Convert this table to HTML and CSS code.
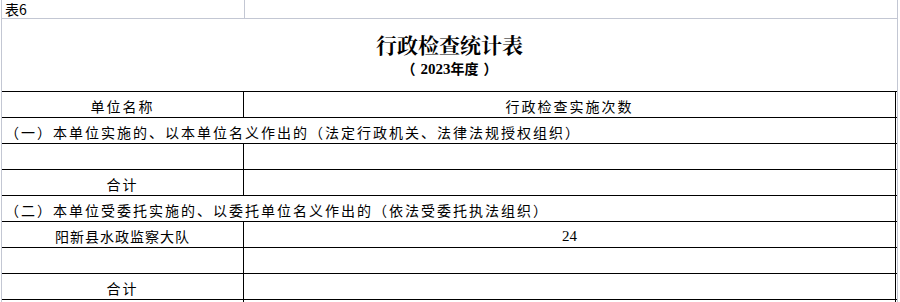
FILE: index.html
```html
<!DOCTYPE html>
<html lang="zh-CN">
<head>
<meta charset="utf-8">
<title>行政检查统计表</title>
<link rel="stylesheet" href="styles.css">
</head>
<body>
<div class="sheet">
  <div class="row-top">
    <div class="cell-a">表6</div>
    <div class="cell-b"></div>
  </div>
  <div class="title-row">
    <div class="title">行政检查统计表</div>
    <div class="subtitle">（<span class="inner"><span class="num">2023</span>年度</span>）</div>
  </div>
  <div class="table">
    <div class="tr">
      <div class="td c1 center">单位名称</div>
      <div class="td c2 center">行政检查实施次数</div>
    </div>
    <div class="tr">
      <div class="td span">（一）本单位实施的、以本单位名义作出的（法定行政机关、法律法规授权组织）</div>
    </div>
    <div class="tr">
      <div class="td c1"></div>
      <div class="td c2"></div>
    </div>
    <div class="tr">
      <div class="td c1 center">合计</div>
      <div class="td c2"></div>
    </div>
    <div class="tr">
      <div class="td span">（二）本单位受委托实施的、以委托单位名义作出的（依法受委托执法组织）</div>
    </div>
    <div class="tr">
      <div class="td c1 center tight">阳新县水政监察大队</div>
      <div class="td c2 center num">24</div>
    </div>
    <div class="tr">
      <div class="td c1"></div>
      <div class="td c2"></div>
    </div>
    <div class="tr">
      <div class="td c1 center">合计</div>
      <div class="td c2"></div>
    </div>
    <div class="tr">
      <div class="td c1"></div>
      <div class="td c2"></div>
    </div>
  </div>
</div>
</body>
</html>
```

FILE: styles.css
```css
html, body {
  margin: 0;
  padding: 0;
  background: #ffffff;
}

body {
  font-family: "Noto Sans CJK SC", "Noto Sans", sans-serif;
  color: #000;
  width: 900px;
  height: 302px;
  overflow: hidden;
}

.sheet {
  margin-left: 1px;
  border-left: 1px solid #c3c7d3;
  border-right: 1px solid #c3c7d3;
  height: 302px;
  width: 895px;
  overflow: hidden;
}

.row-top {
  display: flex;
  height: 18px;
  border-bottom: 1px solid #c3c7d3;
}

.cell-a {
  width: 239px;
  padding-left: 3px;
  border-right: 1px solid #c3c7d3;
  font-size: 14px;
  line-height: 18px;
}

.cell-b {
  flex: 1;
}

.title-row {
  height: 72px;
  display: flex;
  flex-direction: column;
  align-items: center;
}

.title {
  margin-top: 12px;
  font-family: "Noto Serif CJK SC", "Noto Sans CJK SC", serif;
  font-weight: 700;
  font-size: 21px;
  line-height: 26px;
}

.subtitle {
  margin-top: 2px;
  font-weight: 700;
  font-size: 14px;
  line-height: 18px;
}

.subtitle .inner {
  padding: 0 5px;
}

.subtitle .num {
  font-family: "Liberation Serif", serif;
  font-size: 15px;
}

.table {
  border-top: 1px solid #000;
  width: 895px;
}

.tr {
  display: flex;
  height: 25px;
  border-bottom: 1px solid #000;
}

.td {
  font-size: 14px;
  line-height: 25px;
  padding-top: 2px;
  box-sizing: border-box;
  height: 25px;
  letter-spacing: 2px;
  white-space: nowrap;
}

.c1 {
  width: 242px;
  border-right: 1px solid #000;
}

.c2 {
  width: 652px;
  border-right: 1px solid #000;
}

.span {
  width: 894px;
  border-right: 1px solid #000;
  padding-left: 3px;
}

.center {
  text-align: center;
}

.tight {
  letter-spacing: 1px;
}

.td.num {
  font-family: "Liberation Serif", serif;
  font-size: 15px;
  letter-spacing: 0;
}
```
